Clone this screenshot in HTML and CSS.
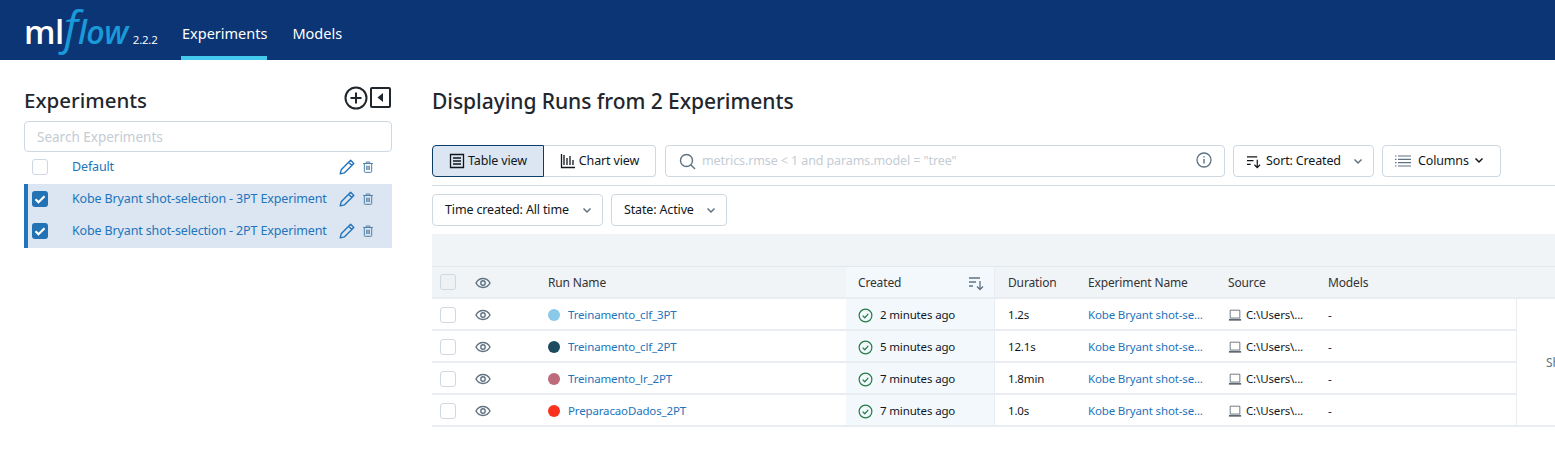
FILE: index.html
```html
<!DOCTYPE html>
<html>
    <head>
        <meta charset="utf-8">
        <title>MLflow</title>
        <link rel="stylesheet" href="styles.css">
    </head>
    <body>
        <svg class="defs" width="0" height="0">
            <symbol id="i-pencil" viewBox="0 0 16 16"><path d="M11.600 1.200l3.200 3.200-9.500 9.500-4.100 1 1-4.100zM9.600 3.200l3.200 3.200" fill="none" stroke="currentColor" stroke-width="1.400" stroke-linejoin="round"/></symbol>
            <symbol id="i-trash" viewBox="0 0 16 16"><path d="M2.500 4h11M6 4V2.300h4V4M3.800 4v9.200c0 .5.4.9.9.9h6.600c.5 0 .9-.4.9-.9V4M6.500 6.500v5M8 6.500v5M9.500 6.500v5" fill="none" stroke="currentColor" stroke-width="1.100"/></symbol>
            <symbol id="i-eye" viewBox="0 0 16 16"><path d="M1 8c1.600-3 4-4.500 7-4.500S13.400 5 15 8c-1.600 3-4 4.500-7 4.500S2.600 11 1 8z" fill="none" stroke="currentColor" stroke-width="1.400"/><circle cx="8" cy="8" r="2.200" fill="none" stroke="currentColor" stroke-width="1.400"/></symbol>
            <symbol id="i-ok" viewBox="0 0 16 16"><circle cx="8" cy="8" r="6.800" fill="none" stroke="currentColor" stroke-width="1.300"/><path d="M5 8.200l2.200 2.200L11 6.200" fill="none" stroke="currentColor" stroke-width="1.300"/></symbol>
            <symbol id="i-laptop" viewBox="0 0 16 16"><path d="M2.500 2.500h11v9h-11z" fill="none" stroke="currentColor" stroke-width="1"/><path d="M1 12.500h14V14.500H1z" fill="currentColor"/></symbol>
            <symbol id="i-sort" viewBox="0 0 16 16"><path d="M1 3h11M1 7h7M1 11h4M12 6v8.500M9 11.500l3 3 3-3" fill="none" stroke="currentColor" stroke-width="1.300"/></symbol>
            <symbol id="i-chev" viewBox="0 0 12 12"><path d="M2.500 4.500L6 8l3.500-3.500" fill="none" stroke="currentColor" stroke-width="1.500"/></symbol>
        </svg>

        <div class="topbar">
            <div class="logo"><span class="logo-ml">ml</span><span class="logo-f">f</span><span class="logo-flow">low</span><span class="logo-ver">2.2.2</span></div>
            <a class="tab tab-active">Experiments</a>
            <a class="tab">Models</a>
        </div>

        <div class="page">
            <div class="side">
                <div class="side-head">
                    <span class="side-title">Experiments</span>
                    <svg class="side-add" width="24" height="24" viewBox="0 0 24 24"><circle cx="12" cy="12" r="10.500" fill="none" stroke="#1f272d" stroke-width="2"/><path d="M12 6.500v11M6.500 12h11" stroke="#1f272d" stroke-width="2"/></svg>
                    <svg class="side-hide" width="21" height="21" viewBox="0 0 21 21"><rect x="1" y="1" width="19" height="19" rx="1" fill="none" stroke="#1f272d" stroke-width="2"/><path d="M13 6v9l-5.500-4.500z" fill="#1f272d"/></svg>
                </div>
                <div class="side-search">Search Experiments</div>
                <div class="exp">
                    <span class="check"></span>
                    <a class="exp-name">Default</a>
                    <svg class="exp-edit"><use href="#i-pencil"/></svg>
                    <svg class="exp-del"><use href="#i-trash"/></svg>
                </div>
                <div class="exp exp-on">
                    <span class="check check-on"><svg width="16" height="16" viewBox="0 0 16 16"><path d="M3.500 8.200l3 3 6-6" fill="none" stroke="#fff" stroke-width="2.200"/></svg></span>
                    <a class="exp-name">Kobe Bryant shot-selection - 3PT Experiment</a>
                    <svg class="exp-edit"><use href="#i-pencil"/></svg>
                    <svg class="exp-del"><use href="#i-trash"/></svg>
                </div>
                <div class="exp exp-on">
                    <span class="check check-on"><svg width="16" height="16" viewBox="0 0 16 16"><path d="M3.500 8.200l3 3 6-6" fill="none" stroke="#fff" stroke-width="2.200"/></svg></span>
                    <a class="exp-name">Kobe Bryant shot-selection - 2PT Experiment</a>
                    <svg class="exp-edit"><use href="#i-pencil"/></svg>
                    <svg class="exp-del"><use href="#i-trash"/></svg>
                </div>
            </div>

            <div class="main">
                <h1 class="main-title">Displaying Runs from 2 Experiments</h1>

                <div class="tools">
                    <div class="switch">
                        <span class="switch-btn switch-on">
                            <svg width="16" height="16" viewBox="0 0 16 16"><path d="M1.500 1.500h13v13h-13zM4 5h8M4 8h8M4 11h8" fill="none" stroke="#11171c" stroke-width="1.300"/></svg>
                            Table view
                        </span>
                        <span class="switch-btn">
                            <svg width="16" height="16" viewBox="0 0 16 16"><path d="M1.500 1v13.500H15M4 2v10M7 5v7M10 3v9M13 7v5" fill="none" stroke="#11171c" stroke-width="1.300"/></svg>
                            Chart view
                        </span>
                    </div>
                    <div class="query">
                        <svg width="17" height="17" viewBox="0 0 17 17"><circle cx="7.500" cy="7.500" r="6" fill="none" stroke="#5f7281" stroke-width="1.400"/><path d="M12 12l4 4" stroke="#5f7281" stroke-width="1.400"/></svg>
                        <span class="query-text">metrics.rmse &lt; 1 and params.model = "tree"</span>
                        <svg class="query-info" width="16" height="16" viewBox="0 0 16 16"><circle cx="8" cy="8" r="7" fill="none" stroke="#5f7281" stroke-width="1.300"/><path d="M8 7v4.500M8 4.200v1.300" stroke="#5f7281" stroke-width="1.400"/></svg>
                    </div>
                    <span class="btn btn-sort">
                        <svg class="ic-sort"><use href="#i-sort"/></svg>
                        <span class="btn-label">Sort: Created</span>
                        <svg class="ic-chev"><use href="#i-chev"/></svg>
                    </span>
                    <span class="btn btn-cols">
                        <svg width="16" height="16" viewBox="0 0 16 16"><path d="M0 3h1.500M3 3h13M0 6.300h1.500M3 6.300h13M0 9.600h1.500M3 9.600h13M0 13h1.500M3 13h13" stroke="#5f7281" stroke-width="1.200"/></svg>
                        <span class="btn-label">Columns</span>
                        <svg class="ic-chev ic-dark"><use href="#i-chev"/></svg>
                    </span>
                </div>

                <div class="filters">
                    <span class="btn btn-time"><span class="btn-label">Time created: All time</span><svg class="ic-chev"><use href="#i-chev"/></svg></span>
                    <span class="btn btn-state"><span class="btn-label">State: Active</span><svg class="ic-chev"><use href="#i-chev"/></svg></span>
                </div>

                <div class="band"></div>

                <div class="table">
                    <div class="row row-head">
                        <span class="c-check"><span class="check check-head"></span></span>
                        <span class="c-eye"><svg class="eye"><use href="#i-eye"/></svg></span>
                        <span class="c-name">Run Name</span>
                        <span class="c-created c-created-head">Created<svg class="ic-sort ic-muted"><use href="#i-sort"/></svg></span>
                        <span class="c-dur">Duration</span>
                        <span class="c-exp">Experiment Name</span>
                        <span class="c-src">Source</span>
                        <span class="c-models">Models</span>
                    </div>
                    <div class="row">
                        <span class="c-check"><span class="check"></span></span>
                        <span class="c-eye"><svg class="eye"><use href="#i-eye"/></svg></span>
                        <span class="c-name"><i class="dot dot-a"></i><a>Treinamento_clf_3PT</a></span>
                        <span class="c-created"><svg class="ok"><use href="#i-ok"/></svg>2 minutes ago</span>
                        <span class="c-dur">1.2s</span>
                        <span class="c-exp"><a>Kobe Bryant shot-se...</a></span>
                        <span class="c-src"><svg class="laptop"><use href="#i-laptop"/></svg>C:\Users\...</span>
                        <span class="c-models">-</span>
                    </div>
                    <div class="row">
                        <span class="c-check"><span class="check"></span></span>
                        <span class="c-eye"><svg class="eye"><use href="#i-eye"/></svg></span>
                        <span class="c-name"><i class="dot dot-b"></i><a>Treinamento_clf_2PT</a></span>
                        <span class="c-created"><svg class="ok"><use href="#i-ok"/></svg>5 minutes ago</span>
                        <span class="c-dur">12.1s</span>
                        <span class="c-exp"><a>Kobe Bryant shot-se...</a></span>
                        <span class="c-src"><svg class="laptop"><use href="#i-laptop"/></svg>C:\Users\...</span>
                        <span class="c-models">-</span>
                    </div>
                    <div class="row">
                        <span class="c-check"><span class="check"></span></span>
                        <span class="c-eye"><svg class="eye"><use href="#i-eye"/></svg></span>
                        <span class="c-name"><i class="dot dot-c"></i><a>Treinamento_lr_2PT</a></span>
                        <span class="c-created"><svg class="ok"><use href="#i-ok"/></svg>7 minutes ago</span>
                        <span class="c-dur">1.8min</span>
                        <span class="c-exp"><a>Kobe Bryant shot-se...</a></span>
                        <span class="c-src"><svg class="laptop"><use href="#i-laptop"/></svg>C:\Users\...</span>
                        <span class="c-models">-</span>
                    </div>
                    <div class="row">
                        <span class="c-check"><span class="check"></span></span>
                        <span class="c-eye"><svg class="eye"><use href="#i-eye"/></svg></span>
                        <span class="c-name"><i class="dot dot-d"></i><a>PreparacaoDados_2PT</a></span>
                        <span class="c-created"><svg class="ok"><use href="#i-ok"/></svg>7 minutes ago</span>
                        <span class="c-dur">1.0s</span>
                        <span class="c-exp"><a>Kobe Bryant shot-se...</a></span>
                        <span class="c-src"><svg class="laptop"><use href="#i-laptop"/></svg>C:\Users\...</span>
                        <span class="c-models">-</span>
                    </div>
                    <div class="more">Show more columns</div>
                </div>
            </div>
        </div>
    </body>
</html>
```

FILE: styles.css
```css
html, body {
    margin: 0;
    height: 458px;
    overflow: hidden;
}
body {
    font-family: "Noto Sans", "Open Sans", sans-serif;
    font-size: 12px;
    line-height: 16px;
    color: #11171c;
    background-color: #fff;
}
.defs {
    position: absolute;
}
a {
    color: #2374bb;
}

.topbar {
    display: flex;
    height: 60px;
    padding-left: 24px;
    background-color: #0b3574;
    color: #fff;
}
.logo {
    display: flex;
    align-items: baseline;
    width: 157px;
    font-family: "Open Sans", sans-serif;
    line-height: 52px;
}
.logo-ml {
    font-size: 33px;
    font-weight: 600;
    letter-spacing: -0.500px;
}
.logo-f {
    font-size: 46px;
    font-style: italic;
    color: #1a9ad9;
}
.logo-flow {
    font-size: 32px;
    font-weight: 600;
    font-style: italic;
    color: #1a9ad9;
    letter-spacing: -0.500px;
}
.logo-ver {
    margin-left: 5px;
    font-size: 11.500px;
    letter-spacing: -0.200px;
}
.tab {
    display: block;
    height: 56px;
    margin-right: 24px;
    color: #fff;
    font-size: 14.500px;
    line-height: 67px;
    text-indent: 1px;
}
.tab-active {
    border-bottom: 4px solid #43c9ed;
}

.page {
    display: flex;
}
.side {
    box-sizing: border-box;
    width: 432px;
    padding: 24px 40px 0 24px;
}
.side-head {
    display: flex;
    align-items: flex-start;
    height: 37px;
}
.side-title {
    flex: 1;
    font-size: 20.500px;
    font-weight: 500;
    line-height: 32px;
    color: #1f272d;
}
.side-add {
    margin-top: 2px;
}
.side-hide {
    margin: 3px 1px 0 2px;
}
.side-search {
    box-sizing: border-box;
    height: 31px;
    padding: 7px 12px;
    border: 1px solid #cdd8e2;
    border-radius: 4px;
    color: #c4ccd4;
    font-size: 13.500px;
}
.exp {
    display: flex;
    align-items: center;
    box-sizing: border-box;
    height: 32px;
    padding-left: 8px;
    padding-bottom: 2px;
}
.exp:first-of-type {
    margin-bottom: 1px;
}
.exp-on {
    padding-left: 4px;
    border-left: 4px solid #2374bb;
    background-color: #dbe6f2;
}
.exp-name {
    flex: 1;
    margin-left: 24px;
    font-size: 12.500px;
    letter-spacing: -0.140px;
}
.exp-edit {
    width: 16px;
    height: 16px;
    margin-right: 6px;
    color: #2374bb;
}
.exp-del {
    width: 14px;
    height: 14px;
    margin-right: 17px;
    color: #4b7ba6;
}
.check {
    display: block;
    box-sizing: border-box;
    flex: none;
    width: 16px;
    height: 16px;
    border: 1px solid #cdd8e2;
    border-radius: 3px;
    background-color: #fff;
}
.check-on {
    border: 0;
    background-color: #2272b4;
}
.check-head {
    background-color: #eef2f5;
    margin-top: -2px;
}

.main {
    flex: 1;
    min-width: 0;
}
.main-title {
    margin: 25px 0 28px;
    font-size: 21px;
    font-weight: 500;
    line-height: 32px;
    letter-spacing: -0.050px;
    color: #1f272d;
}
.tools {
    display: flex;
    align-items: center;
    height: 32px;
    padding-bottom: 8px;
    border-bottom: 1px solid #d1d9e1;
    font-size: 12.500px;
}
.switch {
    display: flex;
}
.switch-btn {
    display: flex;
    align-items: center;
    justify-content: center;
    gap: 3px;
    box-sizing: border-box;
    width: 112px;
    height: 32px;
    border: 1px solid #cdd8e2;
    border-left: 0;
    border-radius: 0 4px 4px 0;
    letter-spacing: -0.150px;
}
.switch-on {
    border: 1px solid #0e3d66;
    border-radius: 4px 0 0 4px;
    background-color: #dbe6f2;
}
.query {
    display: flex;
    align-items: center;
    box-sizing: border-box;
    width: 560px;
    height: 32px;
    margin: 0 8px 0 9px;
    padding: 0 12px 0 13px;
    border: 1px solid #cdd8e2;
    border-radius: 4px;
}
.query-text {
    flex: 1;
    margin-left: 6px;
    color: #c4ccd4;
    letter-spacing: -0.100px;
}
.query-info {
    margin-top: -2px;
}
.btn {
    display: flex;
    align-items: center;
    box-sizing: border-box;
    height: 32px;
    padding: 0 9px 0 12px;
    border: 1px solid #cdd8e2;
    border-radius: 4px;
    font-size: 12.500px;
}
.btn-label {
    flex: 1;
    letter-spacing: -0.150px;
}
.btn-sort {
    width: 141px;
    margin-right: 8px;
}
.btn-cols {
    width: 119px;
    padding-right: 15px;
}
.btn-cols .btn-label {
    margin-left: 7px;
}
.btn-time {
    width: 171px;
}
.btn-state {
    width: 116px;
}
.ic-sort {
    width: 15px;
    height: 15px;
    margin-right: 5px;
    color: #11171c;
}
.ic-muted {
    width: 16px;
    height: 16px;
    margin: 0 0 0 auto;
    color: #5f7281;
}
.ic-chev {
    flex: none;
    width: 12px;
    height: 12px;
    color: #5f7281;
}
.ic-dark {
    color: #11171c;
    margin-bottom: 2px;
}
.filters {
    display: flex;
    gap: 8px;
    padding: 8px 0;
}
.band {
    height: 32px;
    background-color: #f1f4f7;
    border-bottom: 1px solid #e3e8ed;
}

.table {
    position: relative;
    overflow: hidden;
}
.row {
    display: grid;
    grid-template-columns: 44px 72px 298px 149px 93px 140px 100px 1fr;
    align-items: center;
    box-sizing: border-box;
    height: 32px;
    border-bottom: 2px solid #e9edf1;
    font-size: 11.500px;
}
.row-head {
    background-color: #f1f4f7;
    color: #333;
    font-size: 12px;
}
.row > span {
    display: flex;
    align-items: center;
    height: 100%;
    box-sizing: border-box;
    padding-top: 2px;
    letter-spacing: -0.150px;
    white-space: nowrap;
}
.row > .c-check {
    padding-left: 8px;
}
.c-name .dot {
    flex: none;
    width: 12px;
    height: 12px;
    margin-right: 8px;
    border-radius: 50%;
}
.dot-a {
    background-color: #8ac9e8;
}
.dot-b {
    background-color: #1c4a5e;
}
.dot-c {
    background-color: #bc6a7c;
}
.dot-d {
    background-color: #fb3120;
}
.row > .c-created {
    padding-left: 12px;
    padding-right: 10px;
    background-color: #f3f8fd;
    border-right: 1px solid #e9edf1;
}
.c-eye .eye {
    width: 16px;
    height: 16px;
    margin-left: -1px;
    color: #5f7281;
}
.c-created .ok {
    width: 15px;
    height: 15px;
    margin-right: 7px;
    color: #277c43;
}
.c-src .laptop {
    width: 14px;
    height: 14px;
    margin-right: 4px;
    color: #5f6a73;
}
.row > .c-dur {
    padding-left: 13px;
}
.more {
    position: absolute;
    top: 32px;
    left: 1084px;
    bottom: 0;
    width: 200px;
    padding: 56px 0 0 29px;
    border-left: 1px solid #e9edf1;
    border-bottom: 2px solid #e9edf1;
    color: #5f7281;
    background-color: #fff;
    white-space: nowrap;
}
```
